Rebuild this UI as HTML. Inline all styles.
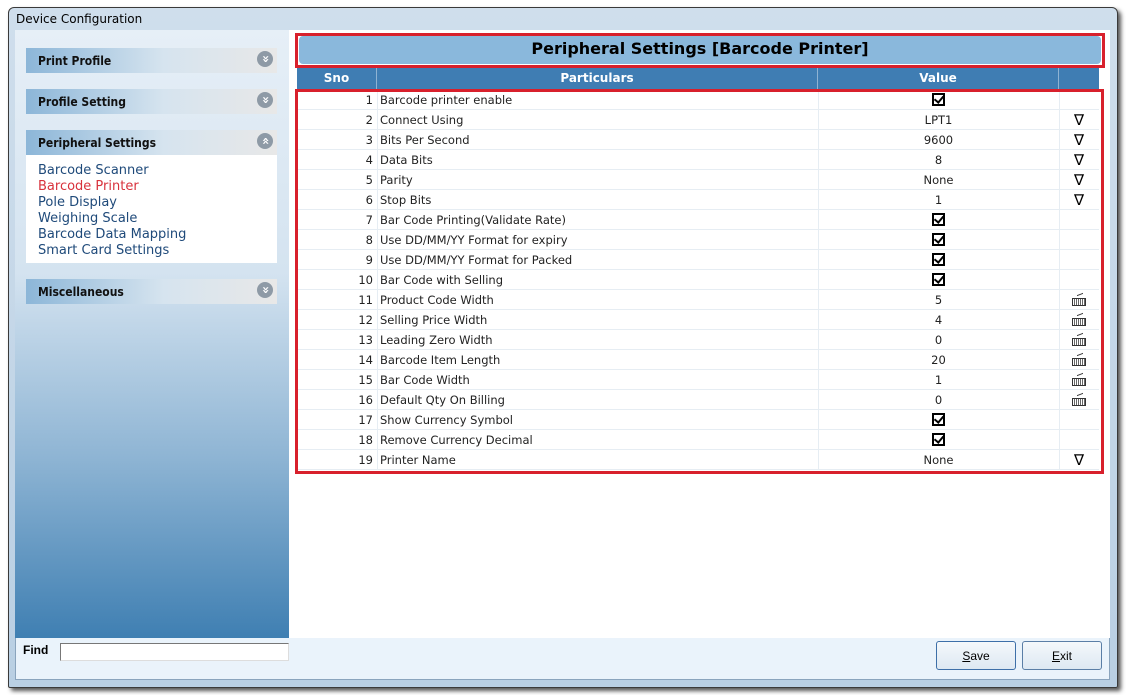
<!DOCTYPE html>
<html><head><meta charset="utf-8"><style>
*{margin:0;padding:0;box-sizing:border-box}
body{width:1131px;height:695px;background:#fff;position:relative;overflow:hidden;font-family:"DejaVu Sans","Liberation Sans",sans-serif}
.win{position:absolute;left:8px;top:7px;width:1110px;height:681px;background:linear-gradient(#cfdeec,#b9cfe3);border:1px solid #3a3a3a;border-radius:6px 6px 2px 2px;box-shadow:3px 3px 4px #555}
.title{position:absolute;left:16px;top:12px;font:12px "DejaVu Sans",sans-serif;color:#000}
.inner{position:absolute;left:15px;top:30px;width:1095px;height:650px;background:#eaf3fb;border:1px solid #8aa4bd}
.left{position:absolute;left:15px;top:30px;width:274px;height:608px;background:linear-gradient(#e6eff7 0%,#d4e3f0 40%,#8fb5d4 70%,#3f7fb2 100%)}
.right{position:absolute;left:289px;top:30px;width:821px;height:608px;background:#fff}
.hd{position:absolute;left:26px;width:251px;height:25px;background:linear-gradient(90deg,#8cb6d8,#d6e4ef 55%,#e8e8e8);font:bold 12px "DejaVu Sans Condensed","DejaVu Sans",sans-serif;color:#111;padding:6px 0 0 12px}
.hd i{position:absolute;right:4px;top:3px;width:16px;height:16px;border-radius:50%;background:#8e9aa6;color:#fff;font:bold 12px "DejaVu Sans",sans-serif;font-style:normal;text-align:center;line-height:15px;transform:rotate(90deg)}
.list{position:absolute;left:26px;top:155px;width:251px;height:108px;background:#fff;padding:8px 0 0 12px;font:13px "DejaVu Sans",sans-serif;color:#1f4a7a;line-height:16px}
.rb{position:absolute;border:3px solid #d8202c}
.gt{position:absolute;left:299px;top:36px;width:802px;height:28px;background:#8ab8dc;border-radius:4px;font:bold 16px "DejaVu Sans",sans-serif;text-align:center;line-height:26px;color:#000}
.gh{position:absolute;left:297px;top:68px;width:802px;height:21px;background:#3f7db3;color:#fff;font:bold 12px "DejaVu Sans",sans-serif}
.gh div{position:absolute;top:0;height:21px;line-height:21px;text-align:center;border-right:1px solid #8fb3d3}
.rows{position:absolute;left:297px;top:90px;width:802px}
.r{height:20px;border-bottom:1px solid #e6edf3;position:relative;font:11.5px "DejaVu Sans",sans-serif;color:#222;line-height:20px}
.r span{position:absolute;top:0}
.sn{left:0;width:76px;text-align:right}
.pt{left:83px}
.vl{left:521px;width:241px;text-align:center}
.ic{left:762px;width:40px;text-align:center;font-size:15px;color:#000}
.kb{display:inline-block;width:14px;height:8px;border:1px solid #333;background:repeating-linear-gradient(90deg,#fff 0 1px,#666 1px 2px);vertical-align:-1px;position:relative}
.kb:before{content:"";position:absolute;left:4px;top:-5px;width:6px;height:3px;border-top:1px solid #333;transform:skewY(-20deg)}
.cv{position:absolute;left:521px;width:1px;top:0;bottom:0;background:#e6edf3}
.cv2{position:absolute;left:762px;width:1px;top:0;bottom:0;background:#e6edf3}
.cv0{position:absolute;left:80px;width:1px;top:0;bottom:0;background:#e6edf3}
.cb{display:inline-block;width:13px;height:13px;border:2px solid #000;vertical-align:-2px;position:relative}
.cb:after{content:"";position:absolute;left:2px;top:-1px;width:4px;height:7px;border:solid #000;border-width:0 2px 2px 0;transform:rotate(40deg)}
.btn{position:absolute;top:641px;width:80px;height:29px;border:1px solid #5a7ea6;border-radius:3px;background:linear-gradient(#f4f8fb,#dde8f2);font:12px "Liberation Sans Narrow","Liberation Sans",sans-serif;text-align:center;line-height:28px}
</style></head><body>
<div class="win"></div>
<div class="title">Device Configuration</div>
<div class="inner"></div>
<div class="left"></div>
<div class="right"></div>
<div class="hd" style="top:48px">Print Profile<i>»</i></div>
<div class="hd" style="top:89px">Profile Setting<i>»</i></div>
<div class="hd" style="top:130px">Peripheral Settings<i>«</i></div>
<div class="list">Barcode Scanner<br><span style="color:#d8323c">Barcode Printer</span><br>Pole Display<br>Weighing Scale<br>Barcode Data Mapping<br>Smart Card Settings</div>
<div class="hd" style="top:279px">Miscellaneous<i>»</i></div>
<div class="rb" style="left:295px;top:33px;width:810px;height:35px"></div>
<div class="gt">Peripheral Settings [Barcode Printer]</div>
<div class="gh"><div style="left:0;width:80px">Sno</div><div style="left:80px;width:441px">Particulars</div><div style="left:521px;width:241px">Value</div><div style="left:762px;width:40px;border:0"></div></div>
<div class="rows">
<div class="cv0"></div><div class="cv"></div><div class="cv2"></div>
<div class="r"><span class="sn">1</span><span class="pt">Barcode printer enable</span><span class="vl"><b class="cb"></b></span></div>
<div class="r"><span class="sn">2</span><span class="pt">Connect Using</span><span class="vl">LPT1</span><span class="ic">∇</span></div>
<div class="r"><span class="sn">3</span><span class="pt">Bits Per Second</span><span class="vl">9600</span><span class="ic">∇</span></div>
<div class="r"><span class="sn">4</span><span class="pt">Data Bits</span><span class="vl">8</span><span class="ic">∇</span></div>
<div class="r"><span class="sn">5</span><span class="pt">Parity</span><span class="vl">None</span><span class="ic">∇</span></div>
<div class="r"><span class="sn">6</span><span class="pt">Stop Bits</span><span class="vl">1</span><span class="ic">∇</span></div>
<div class="r"><span class="sn">7</span><span class="pt">Bar Code Printing(Validate Rate)</span><span class="vl"><b class="cb"></b></span></div>
<div class="r"><span class="sn">8</span><span class="pt">Use DD/MM/YY Format for expiry</span><span class="vl"><b class="cb"></b></span></div>
<div class="r"><span class="sn">9</span><span class="pt">Use DD/MM/YY Format for Packed</span><span class="vl"><b class="cb"></b></span></div>
<div class="r"><span class="sn">10</span><span class="pt">Bar Code with Selling</span><span class="vl"><b class="cb"></b></span></div>
<div class="r"><span class="sn">11</span><span class="pt">Product Code Width</span><span class="vl">5</span><span class="ic"><b class="kb"></b></span></div>
<div class="r"><span class="sn">12</span><span class="pt">Selling Price Width</span><span class="vl">4</span><span class="ic"><b class="kb"></b></span></div>
<div class="r"><span class="sn">13</span><span class="pt">Leading Zero Width</span><span class="vl">0</span><span class="ic"><b class="kb"></b></span></div>
<div class="r"><span class="sn">14</span><span class="pt">Barcode Item Length</span><span class="vl">20</span><span class="ic"><b class="kb"></b></span></div>
<div class="r"><span class="sn">15</span><span class="pt">Bar Code Width</span><span class="vl">1</span><span class="ic"><b class="kb"></b></span></div>
<div class="r"><span class="sn">16</span><span class="pt">Default Qty On Billing</span><span class="vl">0</span><span class="ic"><b class="kb"></b></span></div>
<div class="r"><span class="sn">17</span><span class="pt">Show Currency Symbol</span><span class="vl"><b class="cb"></b></span></div>
<div class="r"><span class="sn">18</span><span class="pt">Remove Currency Decimal</span><span class="vl"><b class="cb"></b></span></div>
<div class="r"><span class="sn">19</span><span class="pt">Printer Name</span><span class="vl">None</span><span class="ic">∇</span></div>
</div>
<div class="rb" style="left:295px;top:89px;width:809px;height:385px"></div>
<div style="position:absolute;left:23px;top:643px;font:bold 12px 'Liberation Sans Narrow','Liberation Sans',sans-serif">Find</div>
<div style="position:absolute;left:60px;top:643px;width:229px;height:18px;background:#fff;border:1px solid #777;border-right-color:#ddd;border-bottom-color:#ddd"></div>
<div class="btn" style="left:936px;border-color:#3d6fa8"><u>S</u>ave</div>
<div class="btn" style="left:1022px"><u>E</u>xit</div>
</body></html>
